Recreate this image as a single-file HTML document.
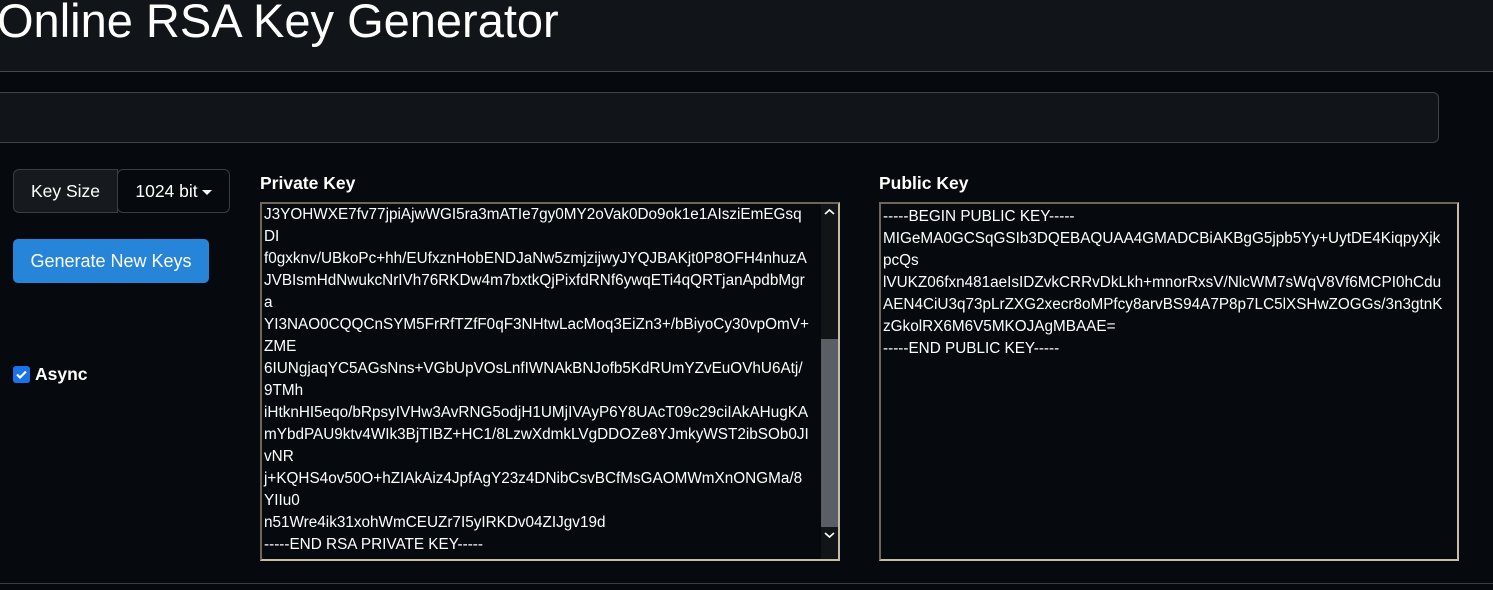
<!DOCTYPE html>
<html><head><meta charset="utf-8"><style>
*{box-sizing:border-box;margin:0;padding:0}
body{width:1493px;height:590px;overflow:hidden;background:#060a0e;font-family:"Liberation Sans",Arial,sans-serif;color:#fff;position:relative}
.hdr{position:absolute;left:0;top:0;width:1493px;height:72px;background:#111418;border-bottom:1px solid #45484c}
.hdr h1{position:absolute;left:-3px;top:-5px;font-size:47px;font-weight:normal;line-height:52px;white-space:nowrap}
.inp{position:absolute;left:-10px;top:92px;width:1449px;height:51px;background:#111418;border:1px solid #3f4247;border-radius:6px}
.ks{position:absolute;left:13px;top:169px;width:105px;height:44px;background:#161a1e;border:1px solid #3a3d42;border-radius:6px 0 0 6px;font-size:17.5px;line-height:42px;text-align:center}
.bit{position:absolute;left:117px;top:169px;width:113px;height:44px;background:#060a0e;border:1px solid #3a3d42;border-radius:6px;font-size:17.5px;line-height:42px;text-align:center}
.car{display:inline-block;width:0;height:0;border-left:5px solid transparent;border-right:5px solid transparent;border-top:5px solid #fff;vertical-align:middle;margin-left:4px}
.gen{position:absolute;left:13px;top:239px;width:196px;height:44px;background:#2685d9;border-radius:5px;font-size:18px;line-height:44px;text-align:center}
.chk{position:absolute;left:13px;top:366px;width:17px;height:17px;background:#1a73e8;border-radius:3px}
.asy{position:absolute;left:35px;top:364px;font-size:17.5px;font-weight:bold}
.lbl{position:absolute;top:173px;font-size:17.5px;font-weight:bold}
.ta{position:absolute;top:202px;height:359px;border:2px solid;border-color:#6e665a #c8bca8 #c8bca8 #6e665a;background:#060a0e;overflow:hidden;font-size:15.3px;line-height:22px;padding:2px 2px;white-space:pre}
.sb{position:absolute;right:0;top:0;width:17px;height:100%;background:#121518}
.th{position:absolute;right:0;top:135px;width:17px;height:188px;background:#5a5f65}
</style></head><body>
<div class="hdr"><h1>Online RSA Key Generator</h1></div>
<div class="inp"></div>
<div class="ks">Key Size</div>
<div class="bit">1024 bit<span class="car"></span></div>
<div class="gen">Generate New Keys</div>
<div class="chk"><svg width="17" height="17" viewBox="0 0 17 17"><path d="M4 8.5l3 3 6-6" stroke="#fff" stroke-width="2.2" fill="none"/></svg></div>
<div class="asy">Async</div>
<div class="lbl" style="left:260px">Private Key</div>
<div class="lbl" style="left:879px">Public Key</div>
<div class="ta" style="left:260px;width:580px;padding-top:0">J3YOHWXE7fv77jpiAjwWGI5ra3mATIe7gy0MY2oVak0Do9ok1e1AIsziEmEGsq
DI
f0gxknv/UBkoPc+hh/EUfxznHobENDJaNw5zmjzijwyJYQJBAKjt0P8OFH4nhuzA
JVBIsmHdNwukcNrIVh76RKDw4m7bxtkQjPixfdRNf6ywqETi4qQRTjanApdbMgr
a
YI3NAO0CQQCnSYM5FrRfTZfF0qF3NHtwLacMoq3EiZn3+/bBiyoCy30vpOmV+
ZME
6IUNgjaqYC5AGsNns+VGbUpVOsLnfIWNAkBNJofb5KdRUmYZvEuOVhU6Atj/
9TMh
iHtknHI5eqo/bRpsyIVHw3AvRNG5odjH1UMjIVAyP6Y8UAcT09c29ciIAkAHugKA
mYbdPAU9ktv4WIk3BjTIBZ+HC1/8LzwXdmkLVgDDOZe8YJmkyWST2ibSOb0JI
vNR
j+KQHS4ov50O+hZIAkAiz4JpfAgY23z4DNibCsvBCfMsGAOMWmXnONGMa/8
YIIu0
n51Wre4ik31xohWmCEUZr7I5yIRKDv04ZIJgv19d
-----END RSA PRIVATE KEY-----<div class="sb"><div class="th"></div><svg style="position:absolute;top:4px;left:3px" width="11" height="8"><path d="M1 6l4.5-4 4.5 4" stroke="#fff" stroke-width="1.6" fill="none"/></svg><svg style="position:absolute;top:327px;left:3px" width="11" height="8"><path d="M1 2l4.5 4 4.5-4" stroke="#fff" stroke-width="1.6" fill="none"/></svg></div></div>
<div class="ta" style="left:879px;width:580px">-----BEGIN PUBLIC KEY-----
MIGeMA0GCSqGSIb3DQEBAQUAA4GMADCBiAKBgG5jpb5Yy+UytDE4KiqpyXjk
pcQs
lVUKZ06fxn481aeIsIDZvkCRRvDkLkh+mnorRxsV/NlcWM7sWqV8Vf6MCPI0hCdu
AEN4CiU3q73pLrZXG2xecr8oMPfcy8arvBS94A7P8p7LC5lXSHwZOGGs/3n3gtnK
zGkolRX6M6V5MKOJAgMBAAE=
-----END PUBLIC KEY-----</div>
<div style="position:absolute;left:0;top:583px;width:1493px;height:1px;background:#3a3d42"></div>
</body></html>
